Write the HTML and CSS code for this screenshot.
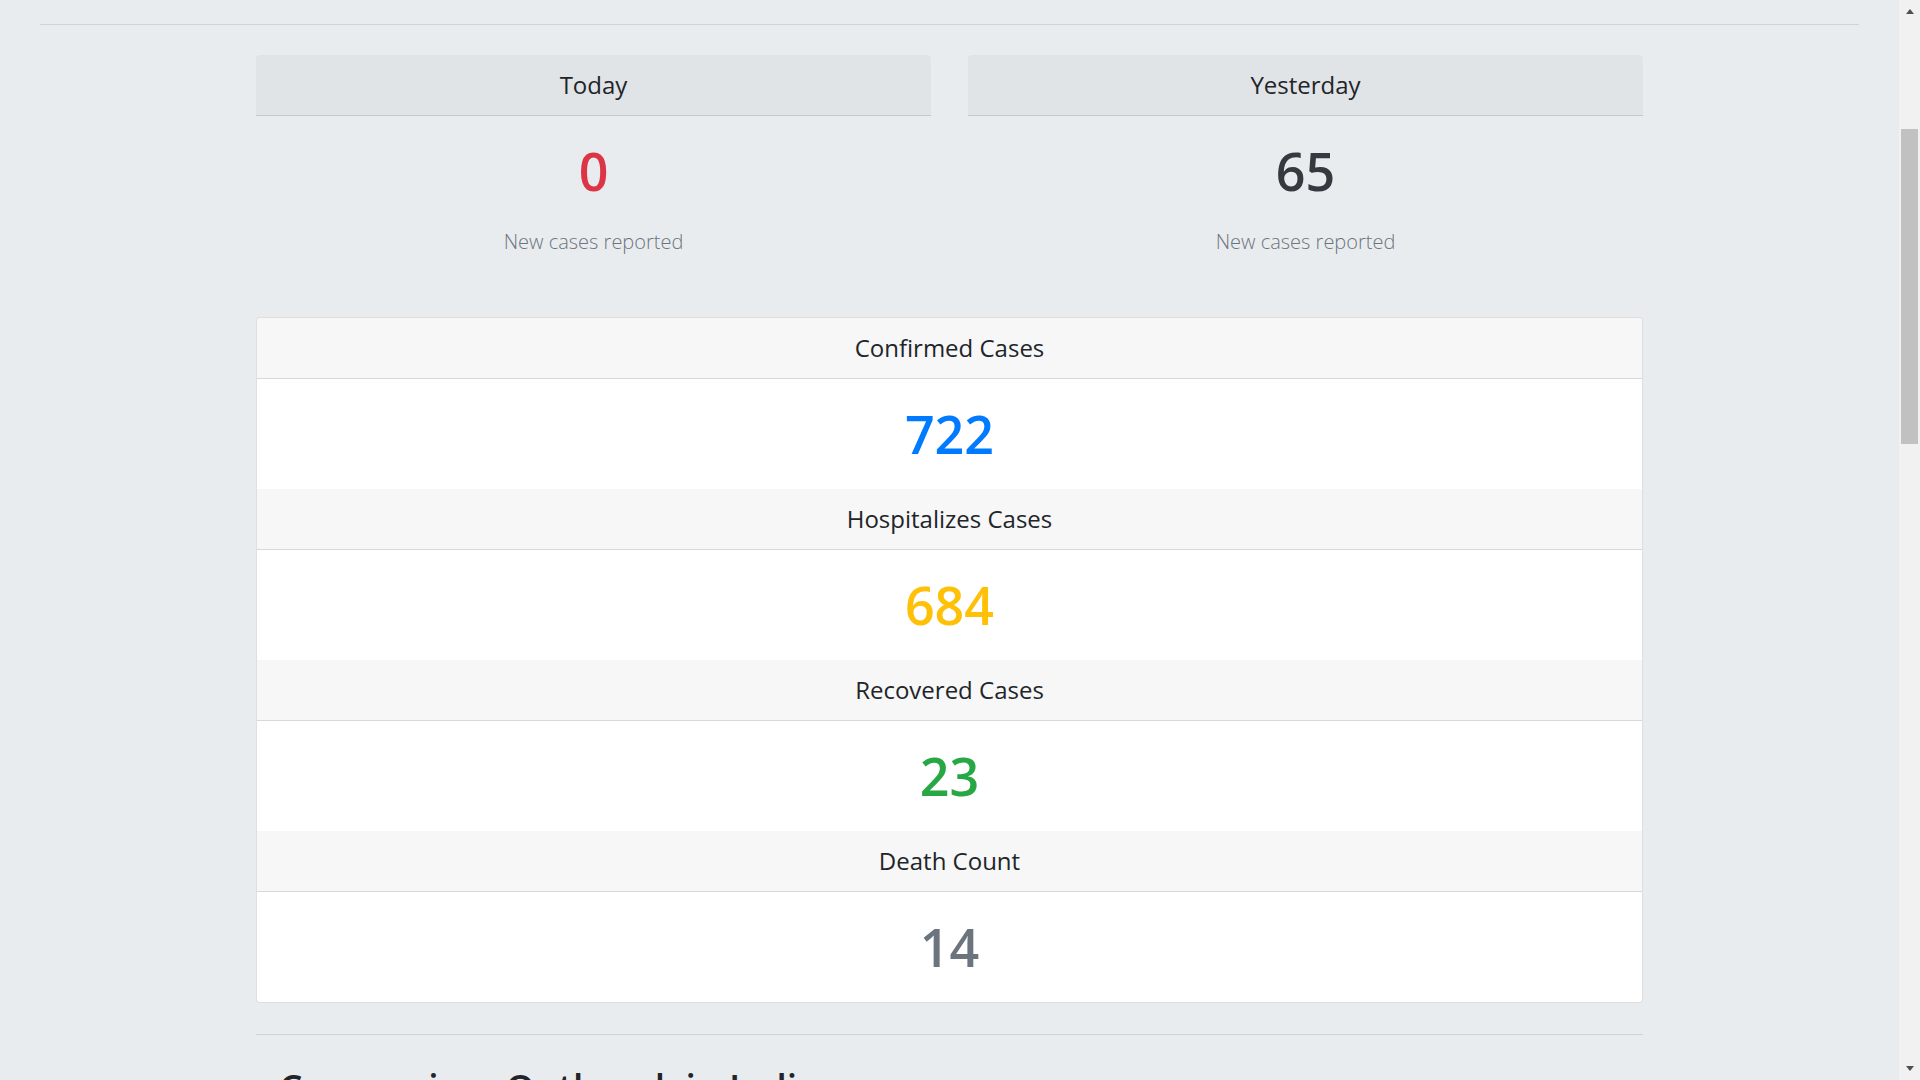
FILE: index.html
```html
<!DOCTYPE html>
<html lang="en">
<head>
<meta charset="utf-8">
<title>COVID-19 Tracker</title>
<link rel="stylesheet" href="styles.css">
</head>
<body>
<div class="viewport">
  <main class="page">
    <hr class="rule">
    <div class="container">
      <div class="today-row">
        <section class="stat">
          <div class="stat-header"><h4 class="stat-title">Today</h4></div>
          <div class="stat-body">
            <h1 class="stat-num text-danger">0</h1>
            <p class="stat-label">New cases reported</p>
          </div>
        </section>
        <section class="stat">
          <div class="stat-header"><h4 class="stat-title">Yesterday</h4></div>
          <div class="stat-body">
            <h1 class="stat-num text-dark">65</h1>
            <p class="stat-label">New cases reported</p>
          </div>
        </section>
      </div>

      <div class="summary">
        <div class="summary-header"><h4 class="summary-title">Confirmed Cases</h4></div>
        <div class="summary-body"><h1 class="summary-num text-primary">722</h1></div>
        <div class="summary-header"><h4 class="summary-title">Hospitalizes Cases</h4></div>
        <div class="summary-body"><h1 class="summary-num text-warning">684</h1></div>
        <div class="summary-header"><h4 class="summary-title">Recovered Cases</h4></div>
        <div class="summary-body"><h1 class="summary-num text-success">23</h1></div>
        <div class="summary-header"><h4 class="summary-title">Death Count</h4></div>
        <div class="summary-body"><h1 class="summary-num text-muted">14</h1></div>
      </div>

      <hr class="rule rule-section">
      <h2 class="section-title">Coronavirus Outbreak in India</h2>
    </div>
  </main>
  <div class="scrollbar" aria-hidden="true">
    <div class="sb-button"><span class="sb-arrow-up"></span></div>
    <div class="sb-track"><div class="sb-thumb"></div></div>
    <div class="sb-button sb-button-down"><span class="sb-arrow-down"></span></div>
  </div>
</div>
</body>
</html>
```

FILE: styles.css
```css
html, body {
  margin: 0;
  padding: 0;
  height: 100%;
  overflow: hidden;
}

body {
  background: #e9ecef;
  color: #212529;
  font-family: "Open Sans", "Noto Sans", "Liberation Sans", sans-serif;
}

.viewport {
  display: flex;
  height: 100vh;
  overflow: hidden;
}

.page {
  flex: 1;
  min-width: 0;
  padding: 24px 40px 0;
  overflow: hidden;
}

.rule {
  margin: 0;
  height: 0;
  border: 0;
  border-top: 1px solid rgba(0, 0, 0, 0.1);
}

.container {
  width: 1387px;
  margin: 30px auto 0;
}

.today-row {
  display: grid;
  grid-template-columns: 1fr 1fr;
  column-gap: 37px;
  margin-bottom: 60px;
}

.stat {
  text-align: center;
}

.stat-header {
  background: rgba(0, 0, 0, 0.03);
  border-bottom: 1px solid rgba(0, 0, 0, 0.125);
  border-radius: 4px 4px 0 0;
  padding: 16px 20px 16px;
}

.stat-title,
.summary-title {
  margin: 0;
  font-size: 24px;
  line-height: 28px;
  font-weight: 500;
  color: #212529;
}

.stat-body {
  padding: 24px 20px 0;
}

.stat-num {
  margin: 0 0 25px;
  font-size: 52px;
  line-height: 62px;
  font-weight: 600;
}

.stat-label {
  margin: 0;
  font-size: 20px;
  line-height: 30px;
  font-weight: 300;
  color: #6c757d;
}

.summary {
  background: #fff;
  border: 1px solid rgba(0, 0, 0, 0.125);
  border-radius: 4px;
  overflow: hidden;
  text-align: center;
}

.summary-header {
  background: rgba(0, 0, 0, 0.03);
  border-bottom: 1px solid rgba(0, 0, 0, 0.125);
  padding: 16px 20px 16px;
}

.summary-body {
  padding: 24px 20px 24px;
}

.summary-num {
  margin: 0;
  font-size: 52px;
  line-height: 62px;
  font-weight: 600;
}

.text-danger { color: #dc3545; }
.text-dark { color: #343a40; }
.text-primary { color: #007bff; }
.text-warning { color: #ffc107; }
.text-success { color: #28a745; }
.text-muted { color: #6c757d; }

.rule-section {
  margin-top: 31px;
}

.section-title {
  margin: 31px 0 0;
  padding-left: 23px;
  font-size: 37px;
  line-height: 44px;
  font-weight: 600;
  white-space: nowrap;
}

/* window scrollbar */
.scrollbar {
  width: 21px;
  flex: 0 0 21px;
  background: #f1f1f1;
  display: flex;
  flex-direction: column;
}

.sb-button {
  height: 17px;
  display: flex;
  justify-content: center;
  align-items: flex-start;
  padding-top: 9px;
  box-sizing: border-box;
}

.sb-button-down {
  align-items: flex-end;
  padding-top: 0;
  padding-bottom: 9px;
}

.sb-arrow-up {
  width: 0;
  height: 0;
  border-left: 4.5px solid transparent;
  border-right: 4.5px solid transparent;
  border-bottom: 5px solid #505050;
}

.sb-arrow-down {
  width: 0;
  height: 0;
  border-left: 4.5px solid transparent;
  border-right: 4.5px solid transparent;
  border-top: 5px solid #505050;
}

.sb-track {
  flex: 1;
  padding: 0 2px;
}

.sb-thumb {
  margin-top: 112px;
  height: 315px;
  background: #c1c1c1;
}
```
